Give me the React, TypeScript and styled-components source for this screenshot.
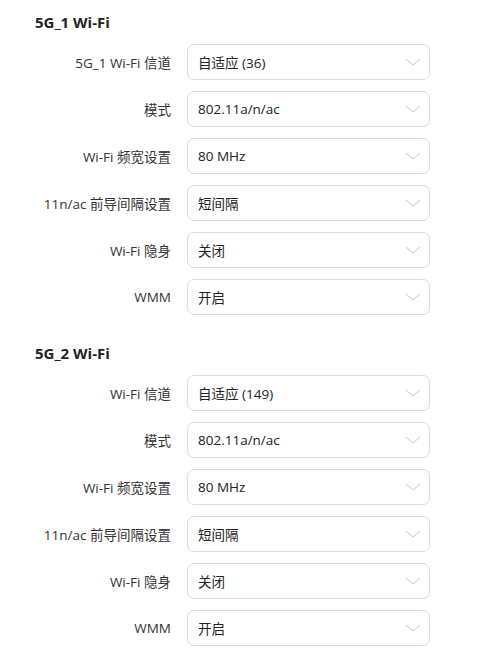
import styled, { createGlobalStyle } from 'styled-components';

const GlobalStyle = createGlobalStyle`
  body {
    margin: 0;
    background: #fff;
    font-family: "Open Sans", "Noto Sans", "Noto Sans CJK SC", sans-serif;
    color: #333;
  }
`;

type Field = { label: string; value: string };

const sections: { title: string; fields: Field[] }[] = [
  {
    title: '5G_1 Wi-Fi',
    fields: [
      { label: '5G_1 Wi-Fi 信道', value: '自适应 (36)' },
      { label: '模式', value: '802.11a/n/ac' },
      { label: 'Wi-Fi 频宽设置', value: '80 MHz' },
      { label: '11n/ac 前导间隔设置', value: '短间隔' },
      { label: 'Wi-Fi 隐身', value: '关闭' },
      { label: 'WMM', value: '开启' },
    ],
  },
  {
    title: '5G_2 Wi-Fi',
    fields: [
      { label: 'Wi-Fi 信道', value: '自适应 (149)' },
      { label: '模式', value: '802.11a/n/ac' },
      { label: 'Wi-Fi 频宽设置', value: '80 MHz' },
      { label: '11n/ac 前导间隔设置', value: '短间隔' },
      { label: 'Wi-Fi 隐身', value: '关闭' },
      { label: 'WMM', value: '开启' },
    ],
  },
];

function App() {
  return (
    <>
      <GlobalStyle />
      <Page>
        {sections.map((s) => (
          <Section key={s.title}>
            <Title>{s.title}</Title>
            <Form>
              {s.fields.map((f) => (
                <Row key={f.label}>
                  <Label>{f.label}</Label>
                  <Select>
                    <span>{f.value}</span>
                    <Chevron viewBox='0 0 16 8' fill='none'>
                      <path d='M1 1l7 6 7-6' stroke='#c8c8c8' strokeWidth='1' />
                    </Chevron>
                  </Select>
                </Row>
              ))}
            </Form>
          </Section>
        ))}
      </Page>
    </>
  );
}

const Page = styled.div`
  padding: 12px 0 0 35px;
  width: 395px;
`;

const Section = styled.section`
  margin-bottom: 28px;
`;

const Title = styled.h2`
  margin: 0 0 12px;
  font-size: 15px;
  font-weight: 700;
  line-height: 20px;
  color: #222;
`;

const Form = styled.div`
  display: flex;
  flex-direction: column;
  gap: 11px;
`;

const Row = styled.div`
  display: grid;
  grid-template-columns: 136px 243px;
  column-gap: 16px;
  align-items: center;
`;

const Label = styled.div`
  text-align: right;
  font-size: 13.5px;
  color: #333;
  white-space: nowrap;
`;

const Select = styled.div`
  box-sizing: border-box;
  height: 36px;
  display: flex;
  align-items: center;
  justify-content: space-between;
  padding: 0 8px 0 10px;
  border: 1px solid #dcdcdc;
  border-radius: 7px;
  font-size: 13.5px;
  color: #222;
`;

const Chevron = styled.svg`
  width: 16px;
  height: 8px;
`;

export default App;
